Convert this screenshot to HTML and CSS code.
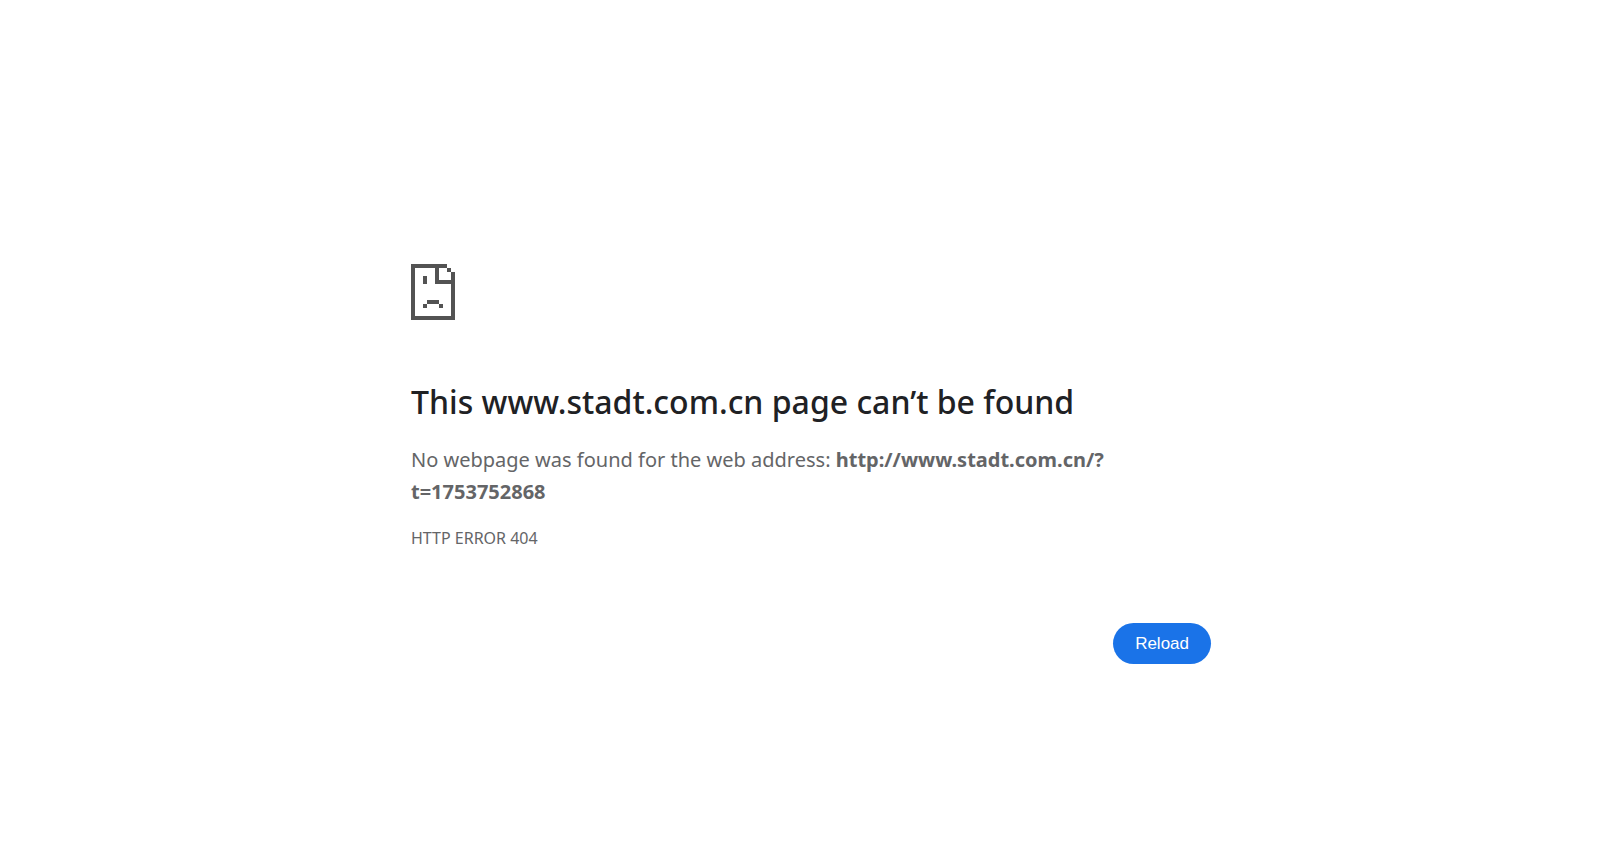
FILE: index.html
```html
<!DOCTYPE html>
<html lang="en">
<head>
<meta charset="utf-8">
<meta name="viewport" content="width=device-width, initial-scale=1">
<title>www.stadt.com.cn</title>
<link rel="stylesheet" href="styles.css">
</head>
<body>
<main class="error-page">
  <svg class="error-icon" viewBox="0 0 11 14" fill="currentColor" shape-rendering="crispEdges" aria-hidden="true">
    <path d="M0 0H9V1H7V4H10V2H11V14H0ZM1 1V13H10V5H6V1Z" fill-rule="evenodd"/>
    <path d="M9 1H10V2H9ZM3 3H4V5H3ZM4 9H7V10H4ZM3 10H4V11H3ZM7 10H8V11H7Z"/>
  </svg>
  <h1 class="error-title">This www.stadt.com.cn page can’t be found</h1>
  <p class="error-summary">No webpage was found for the web address: <strong>http://www.stadt.com.cn/?<wbr>t=1753752868</strong></p>
  <div class="error-code">HTTP ERROR 404</div>
  <div class="actions">
    <button class="reload-button" type="button">Reload</button>
  </div>
</main>
</body>
</html>
```
FILE: styles.css
```css
body {
  margin: 0;
  padding-left: 22px;
  background: #fff;
  color: #646567;
  font-family: "Noto Sans", sans-serif;
  font-size: 20px;
  line-height: 32px;
}

.error-page {
  max-width: 800px;
  margin: 0 auto;
  padding-top: 264px;
}

.error-icon {
  display: block;
  width: 44px;
  height: 56px;
  color: #535353;
}

.error-title {
  margin: 60px 0 20px;
  color: #202124;
  font-size: 32px;
  font-weight: 500;
  line-height: 44px;
}

.error-summary {
  margin: 0;
}

.error-code {
  margin-top: 16px;
  font-size: 16px;
  line-height: 28px;
}

.actions {
  display: flex;
  justify-content: flex-end;
  margin-top: 71px;
}

.reload-button {
  padding: 11px 22px;
  border: 0;
  border-radius: 24px;
  background: #1a73e8;
  color: #fff;
  font-family: "Liberation Sans", Arial, sans-serif;
  font-size: 17px;
  line-height: 19px;
  cursor: pointer;
}
```
